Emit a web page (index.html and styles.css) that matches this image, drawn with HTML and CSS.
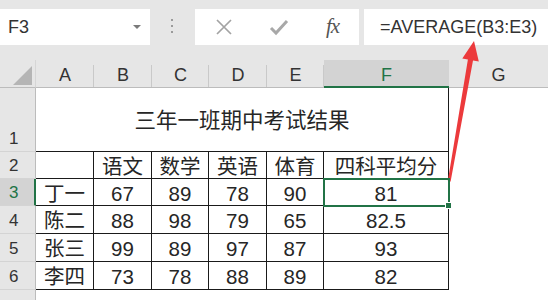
FILE: index.html
```html
<!DOCTYPE html>
<html lang="zh-CN">
<head>
<meta charset="utf-8">
<title>三年一班期中考试结果</title>
<link rel="stylesheet" href="styles.css">
</head>
<body>
<div class="app">
  <div class="toolbar">
    <div class="namebox"><span class="ref">F3</span><span class="caret"></span></div>
    <div class="grip"><i></i><i></i><i></i></div>
    <div class="actions">
      <svg class="ico-x" width="18" height="18" viewBox="0 0 18 18"><path d="M2 2 L16 16 M16 2 L2 16" stroke="#a3a3a3" stroke-width="1.7" fill="none"/></svg>
      <svg class="ico-ok" width="20" height="18" viewBox="0 0 20 18"><path d="M2 10 L7 15 L18 3" stroke="#a8a8a8" stroke-width="3" fill="none"/></svg>
      <span class="fx">fx</span>
    </div>
    <div class="formula">=AVERAGE(B3:E3)</div>
  </div>

  <div class="sheet">
    <div class="corner"><svg width="36" height="28" viewBox="0 0 36 28"><polygon points="13,25 32,25 32,6" fill="#b5b5b5"/></svg></div>
    <div class="ch">A</div>
    <div class="ch">B</div>
    <div class="ch">C</div>
    <div class="ch">D</div>
    <div class="ch">E</div>
    <div class="ch sel">F</div>
    <div class="ch last">G</div>

    <div class="rh">1</div>
    <div class="c title">三年一班期中考试结果</div>
    <div class="g"></div>

    <div class="rh">2</div>
    <div class="c"></div>
    <div class="c">语文</div>
    <div class="c">数学</div>
    <div class="c">英语</div>
    <div class="c">体育</div>
    <div class="c">四科平均分</div>
    <div class="g"></div>

    <div class="rh sel">3</div>
    <div class="c">丁一</div>
    <div class="c">67</div>
    <div class="c">89</div>
    <div class="c">78</div>
    <div class="c">90</div>
    <div class="c active">81</div>
    <div class="g"></div>

    <div class="rh">4</div>
    <div class="c">陈二</div>
    <div class="c">88</div>
    <div class="c">98</div>
    <div class="c">79</div>
    <div class="c">65</div>
    <div class="c">82.5</div>
    <div class="g"></div>

    <div class="rh">5</div>
    <div class="c">张三</div>
    <div class="c">99</div>
    <div class="c">89</div>
    <div class="c">97</div>
    <div class="c">87</div>
    <div class="c">93</div>
    <div class="g"></div>

    <div class="rh">6</div>
    <div class="c">李四</div>
    <div class="c">73</div>
    <div class="c">78</div>
    <div class="c">88</div>
    <div class="c">89</div>
    <div class="c">82</div>
    <div class="g"></div>

    <div class="rh">7</div>
    <div class="g wide"></div>
  </div>

  <svg class="arrow" width="548" height="300" viewBox="0 0 548 300">
    <polygon points="449,182 447.8,181 467.9,59.6 462.3,58.6 474,41 478.8,61.4 473,60.4 450.6,181.5" fill="#ec3a3c"/>
  </svg>
</div>
</body>
</html>
```

FILE: styles.css
```css
html, body {
  margin: 0;
  padding: 0;
  background: #ffffff;
}

body {
  font-family: "Liberation Sans", "Noto Sans CJK SC", sans-serif;
  color: #262626;
}

.app {
  position: relative;
  width: 548px;
  height: 300px;
  overflow: hidden;
}

/* ---------- formula bar ---------- */
.toolbar {
  display: flex;
  align-items: flex-start;
  height: 60px;
  padding-top: 9px;
  box-sizing: border-box;
  background: #e6e6e6;
}

.namebox {
  width: 150px;
  height: 36px;
  box-sizing: border-box;
  background: #ffffff;
  display: flex;
  align-items: center;
  justify-content: space-between;
  padding: 0 9px 0 8px;
  font-size: 18px;
  color: #333333;
}

.caret {
  width: 0;
  height: 0;
  border-left: 4px solid transparent;
  border-right: 4px solid transparent;
  border-top: 4px solid #7a7a7a;
}

.grip {
  margin-left: 21px;
  margin-top: 10px;
  display: flex;
  flex-direction: column;
  gap: 4px;
}

.grip i {
  display: block;
  width: 2px;
  height: 2px;
  background: #9a9a9a;
}

.actions {
  margin-left: 22px;
  width: 164px;
  height: 36px;
  background: #ffffff;
  display: flex;
  align-items: center;
  padding-left: 20px;
  box-sizing: border-box;
}

.ico-x {
  display: block;
}

.ico-ok {
  display: block;
  margin-left: 36px;
}

.fx {
  margin-left: 37px;
  font-family: "Liberation Serif", "DejaVu Serif", serif;
  font-style: italic;
  font-size: 21px;
  color: #555555;
  letter-spacing: -1px;
  margin-top: -2px;
}

.formula {
  margin-left: 5px;
  flex: 1;
  height: 36px;
  background: #ffffff;
  display: flex;
  align-items: center;
  padding-left: 16px;
  font-size: 18px;
  color: #333333;
}

/* ---------- sheet ---------- */
.sheet {
  display: grid;
  grid-template-columns: 36px 58px 58px 57px 58px 57px 125px 1fr;
  grid-template-rows: 28px 64px 27px 27px 28px 28px 28px 30px;
}

.corner {
  background: #e6e6e6;
  border-bottom: 1px solid #bcbcbc;
  border-right: 1px solid #d6d6d6;
  box-sizing: border-box;
}

.corner svg {
  display: block;
}

.ch {
  box-sizing: border-box;
  background: linear-gradient(#c9c9c9, #c9c9c9) right bottom / 1px 22px no-repeat, #e6e6e6;
  border-bottom: 1px solid #bcbcbc;
  display: flex;
  align-items: center;
  justify-content: center;
  padding-top: 3px;
  font-size: 18px;
  color: #333333;
}

.ch.sel {
  background: #d3d3d3;
  color: #217346;
  border-bottom: 2px solid #217346;
  padding-top: 4px;
}

.ch.last {
  background: #e6e6e6;
}

.rh {
  box-sizing: border-box;
  background: #e6e6e6;
  border-right: 1px solid #bcbcbc;
  border-bottom: 1px solid #d4d4d4;
  display: flex;
  align-items: flex-end;
  padding: 0 0 2px 9px;
  font-size: 17px;
  line-height: 20px;
  color: #333333;
}

.rh.sel {
  background: #d3d3d3;
  color: #217346;
  border-right: 2px solid #217346;
}

.c {
  box-sizing: border-box;
  border-right: 1px solid #1a1a1a;
  border-bottom: 1px solid #1a1a1a;
  display: flex;
  align-items: center;
  justify-content: center;
  padding-top: 4px;
  font-size: 20.5px;
  line-height: 1;
  color: #262626;
  white-space: nowrap;
}

.c.title {
  grid-column: span 6;
  font-size: 21.5px;
  padding-top: 5px;
}

.c.active {
  position: relative;
  z-index: 1;
  outline: 2px solid #217346;
  outline-offset: -1px;
}

.c.active::after {
  content: "";
  position: absolute;
  right: -4px;
  bottom: -4px;
  width: 5px;
  height: 5px;
  background: #217346;
  border: 1px solid #ffffff;
}

.g {
  background: #ffffff;
}

.g.wide {
  grid-column: span 7;
}

.arrow {
  position: absolute;
  left: 0;
  top: 0;
  pointer-events: none;
}
```
